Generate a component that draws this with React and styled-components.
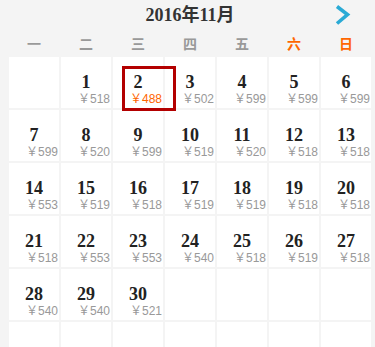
import styled, { createGlobalStyle } from "styled-components";

const GlobalStyle = createGlobalStyle`
  body {
    margin: 0;
    background: #f4f4f4;
    font-family: "Liberation Sans", "Noto Sans CJK SC", sans-serif;
  }
`;

const Container = styled.div`
  width: 375px;
  height: 347px;
  overflow: hidden;
  padding: 0 4px 0 9px;
  box-sizing: border-box;
  background: #f4f4f4;
`;

const Header = styled.div`
  display: grid;
  grid-template-columns: 1fr auto 1fr;
  align-items: center;
  height: 30px;
`;

const Title = styled.h1`
  grid-column: 2;
  margin: 0;
  font-family: "Liberation Serif", "Noto Sans CJK SC", serif;
  font-size: 18px;
  font-weight: bold;
  line-height: 30px;
  color: #333;
`;

const NextButton = styled.button`
  justify-self: end;
  margin-right: 20px;
  padding: 0;
  border: none;
  background: none;
  display: flex;
  cursor: pointer;
`;

const Week = styled.div`
  display: grid;
  grid-template-columns: repeat(7, 50px);
  column-gap: 2px;
  height: 27px;
`;

const WeekDay = styled.span`
  text-align: center;
  line-height: 27px;
  font-family: "Noto Sans CJK SC", sans-serif;
  font-size: 14px;
  font-weight: bold;
  color: ${(p) => (p.$weekend ? "#ff6600" : "#999")};
`;

const Days = styled.div`
  display: grid;
  grid-template-columns: repeat(7, 50px);
  grid-auto-rows: 51px;
  gap: 2px;
`;

const Cell = styled.div`
  position: relative;
  background: #fff;
  padding-top: 15px;
  box-sizing: border-box;
`;

const DayNum = styled.div`
  text-align: center;
  font-family: "Liberation Serif", serif;
  font-size: 18px;
  font-weight: bold;
  line-height: 20px;
  color: #222;
`;

const Price = styled.div`
  text-align: right;
  padding-right: 1px;
  font-size: 12px;
  line-height: 14px;
  white-space: nowrap;
  color: ${(p) => (p.$active ? "#ff6600" : "#999")};
`;

const Highlight = styled.div`
  position: absolute;
  left: 9px;
  top: 9px;
  width: 54px;
  height: 45px;
  box-sizing: border-box;
  border: 3px solid #b30000;
  z-index: 1;
`;

const weekDays = ["一", "二", "三", "四", "五", "六", "日"];

const prices = [
  518, 488, 502, 599, 599, 599, 599, 520, 599, 519, 520, 518, 518, 553, 519,
  518, 519, 519, 518, 518, 518, 553, 553, 540, 518, 519, 518, 540, 540, 521,
];

const selected = 2;

const App = () => {
  const cells = [null, ...prices.map((price, i) => ({ day: i + 1, price }))];
  while (cells.length < 42) cells.push(null);

  return (
    <Container>
      <GlobalStyle />
      <Header>
        <Title>2016年11月</Title>
        <NextButton aria-label="下个月">
          <svg width="16" height="20" viewBox="0 0 16 20">
            <polyline
              points="2,1.5 12.5,9.5 2,18.5"
              fill="none"
              stroke="#2aaad5"
              strokeWidth="3.6"
            />
          </svg>
        </NextButton>
      </Header>
      <Week>
        {weekDays.map((d, i) => (
          <WeekDay key={d} $weekend={i > 4}>
            {d}
          </WeekDay>
        ))}
      </Week>
      <Days>
        {cells.map((c, i) =>
          c ? (
            <Cell key={i}>
              <DayNum>{c.day}</DayNum>
              <Price $active={c.day === selected}>￥{c.price}</Price>
              {c.day === selected && <Highlight />}
            </Cell>
          ) : (
            <Cell key={i} />
          )
        )}
      </Days>
    </Container>
  );
};

export default App;
